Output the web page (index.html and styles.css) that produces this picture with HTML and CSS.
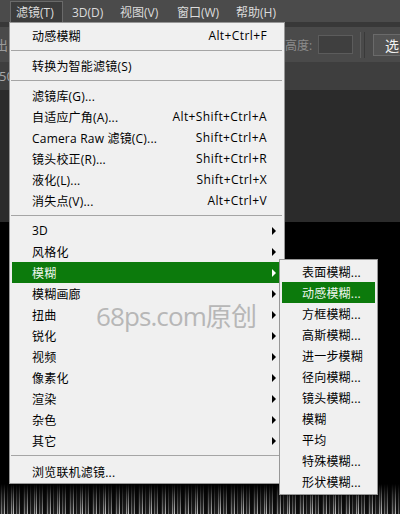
FILE: index.html
```html
<!DOCTYPE html>
<html lang="zh-CN">
<head>
<meta charset="utf-8">
<title>滤镜菜单</title>
<link rel="stylesheet" href="styles.css">
</head>
<body>
<div class="screen">
  <div class="menubar">
    <div class="mb-item active">滤镜(T)</div>
    <div class="mb-item">3D(D)</div>
    <div class="mb-item">视图(V)</div>
    <div class="mb-item">窗口(W)</div>
    <div class="mb-item">帮助(H)</div>
  </div>
  <div class="strip"></div>
  <div class="options">
    <span class="opt-left">出</span>
    <span class="opt-label">高度:</span>
    <span class="opt-input"></span>
    <span class="opt-div"></span>
    <span class="opt-btn">选</span>
  </div>
  <div class="tabs"><span class="tab">50</span></div>
  <div class="canvas"></div>
  <div class="void"></div>
  <div class="streaks"></div>

  <div class="menu">
    <div class="item"><span class="label">动感模糊</span><span class="key">Alt+Ctrl+F</span></div>
    <div class="sep"></div>
    <div class="item"><span class="label">转换为智能滤镜(S)</span></div>
    <div class="sep"></div>
    <div class="item"><span class="label">滤镜库(G)...</span></div>
    <div class="item"><span class="label">自适应广角(A)...</span><span class="key">Alt+Shift+Ctrl+A</span></div>
    <div class="item"><span class="label">Camera Raw 滤镜(C)...</span><span class="key">Shift+Ctrl+A</span></div>
    <div class="item"><span class="label">镜头校正(R)...</span><span class="key">Shift+Ctrl+R</span></div>
    <div class="item"><span class="label">液化(L)...</span><span class="key">Shift+Ctrl+X</span></div>
    <div class="item"><span class="label">消失点(V)...</span><span class="key">Alt+Ctrl+V</span></div>
    <div class="sep"></div>
    <div class="item"><span class="label">3D</span><span class="arrow"></span></div>
    <div class="item"><span class="label">风格化</span><span class="arrow"></span></div>
    <div class="item hl"><span class="label">模糊</span><span class="arrow"></span></div>
    <div class="item"><span class="label">模糊画廊</span><span class="arrow"></span></div>
    <div class="item"><span class="label">扭曲</span><span class="arrow"></span></div>
    <div class="item"><span class="label">锐化</span><span class="arrow"></span></div>
    <div class="item"><span class="label">视频</span><span class="arrow"></span></div>
    <div class="item"><span class="label">像素化</span><span class="arrow"></span></div>
    <div class="item"><span class="label">渲染</span><span class="arrow"></span></div>
    <div class="item"><span class="label">杂色</span><span class="arrow"></span></div>
    <div class="item"><span class="label">其它</span><span class="arrow"></span></div>
    <div class="sep last"></div>
    <div class="item"><span class="label">浏览联机滤镜...</span></div>
  </div>

  <div class="watermark">68ps.com原创</div>

  <div class="submenu">
    <div class="sitem">表面模糊...</div>
    <div class="sitem hl">动感模糊...</div>
    <div class="sitem">方框模糊...</div>
    <div class="sitem">高斯模糊...</div>
    <div class="sitem">进一步模糊</div>
    <div class="sitem">径向模糊...</div>
    <div class="sitem">镜头模糊...</div>
    <div class="sitem">模糊</div>
    <div class="sitem">平均</div>
    <div class="sitem">特殊模糊...</div>
    <div class="sitem">形状模糊...</div>
  </div>
</div>
</body>
</html>
```
FILE: styles.css
```css
* { box-sizing: border-box; }
html, body { margin: 0; padding: 0; background: #000; }
body {
  font-family: "Open Sans", "Noto Sans CJK SC", sans-serif;
  font-size: 12px;
}
.screen {
  position: relative;
  width: 400px;
  height: 514px;
  overflow: hidden;
  display: flex;
  flex-direction: column;
  background: #000;
}
.menubar {
  height: 22px;
  flex: none;
  background: #4b4b4b;
  display: grid;
  grid-template-columns: 56px 48px 57px 59px auto;
  padding-left: 10px;
  color: #dcdcdc;
}
.mb-item {
  display: flex;
  align-items: center;
  padding-left: 5px;
  border: 1px solid transparent;
  border-bottom: 0;
  margin-top: 1px;
  white-space: nowrap;
}
.mb-item.active {
  width: 53px;
  background: #3c3c3c;
  border-color: #6a6a6a;
}
.strip { height: 5px; flex: none; background: #383838; }
.options {
  height: 35px;
  flex: none;
  background: #4a4a4a;
  display: flex;
  align-items: center;
  color: #8e8e8e;
}
.options > span { flex: none; }
.opt-left { width: 290px; margin-left: -5px; color: #9a9a9a; font-size: 13px; }
.opt-label { width: 33px; font-size: 12px; color: #8c8c8c; }
.opt-input {
  width: 35px; height: 19px;
  background: #3f3f3f;
  border: 1px solid #5c5c5c;
}
.opt-div {
  width: 5px; height: 26px;
  margin-left: 7px;
  border-left: 1px solid #5f5f5f;
  border-right: 1px solid #3a3a3a;
}
.opt-btn {
  margin-left: 8px;
  width: 46px; height: 22px;
  background: #535353;
  border: 1px solid #6a6a6a;
  color: #f2f2f2;
  font-size: 14px;
  display: flex; align-items: center;
  padding-left: 11px;
}
.tabs {
  height: 28px;
  flex: none;
  background: #3e3e3e;
  display: flex;
  align-items: center;
}
.tab { color: #a8a8a8; font-size: 13px; margin-left: -1px; }
.canvas { height: 132px; flex: none; background: #2b2b2b; }
.void { flex: 1; background: #000; }
.streaks {
  height: 30px;
  flex: none;
  background:
    linear-gradient(to bottom, #000 0%, rgba(0,0,0,0.65) 35%, rgba(0,0,0,0.15) 100%),
    repeating-linear-gradient(90deg,
      #2a2a2a 0 1px, #9a9a9a 1px 2px, #3a3a3a 2px 4px, #cfcfcf 4px 5px,
      #151515 5px 7px, #777 7px 8px, #262626 8px 11px, #b5b5b5 11px 12px,
      #444 12px 13px, #e0e0e0 13px 14px, #1a1a1a 14px 16px, #888 16px 17px,
      #333 17px 19px, #aaa 19px 20px, #111 20px 23px);
}

/* main dropdown */
.menu {
  position: absolute;
  left: 9px;
  top: 22px;
  width: 276px;
  background: #f0f0f0;
  border: 1px solid #979797;
  padding: 2px 4px 1px 2px;
  color: #000;
}
.item {
  height: 21px;
  display: flex;
  align-items: center;
  padding-left: 20px;
  padding-right: 4px;
  white-space: nowrap;
}
.item .label { letter-spacing: 0.2px; }
.item .key { margin-left: auto; margin-right: 9px; letter-spacing: 0.4px; }
.item .arrow {
  margin-left: auto;
  width: 0; height: 0;
  border-left: 4px solid #000;
  border-top: 4px solid transparent;
  border-bottom: 4px solid transparent;
}
.item.hl { background: #0c7a0c; color: #eef6ee; }
.item.hl .arrow { border-left-color: #fff; }
.sep {
  height: 1px;
  background: #a5a5a5;
  margin: 4px -2px 4px -1px;
}
.sep.last { margin-bottom: 5px; }

.watermark {
  position: absolute;
  left: 96px;
  top: 298px;
  font-family: "Open Sans", "Noto Sans CJK SC", sans-serif;
  font-size: 26px;
  line-height: 36px;
  letter-spacing: -0.9px;
  color: #b7b7b7;
  pointer-events: none;
}

/* submenu */
.submenu {
  position: absolute;
  left: 279px;
  top: 259px;
  width: 99px;
  background: #f0f0f0;
  border: 1px solid #979797;
  padding: 1px 2px 2px 2px;
  box-shadow: 1px 1px 1px rgba(0,0,0,0.25);
}
.sitem {
  height: 21px;
  display: flex;
  align-items: center;
  padding-left: 20px;
  white-space: nowrap;
  color: #000;
  letter-spacing: 0.2px;
}
.sitem.hl { background: #0c7a0c; color: #eef6ee; }
```
